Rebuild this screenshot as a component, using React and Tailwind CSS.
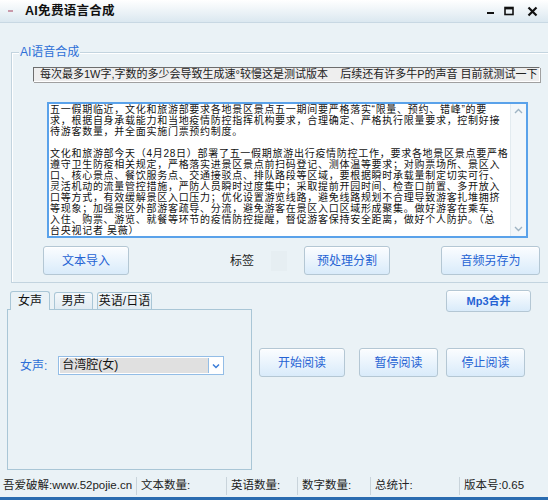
import React from "react";

const font = { fontFamily: '"Liberation Sans", "Noto Sans CJK SC", sans-serif' };

function Btn({ children, className = "" }) {
  return (
    <div
      className={
        "flex items-center justify-center rounded-[3px] border border-[#b4c7d4] bg-gradient-to-b from-[#fbfdff] to-[#d9ebfa] text-[12px] text-[#2563d4] shadow-[inset_0_1px_0_#ffffff] " +
        className
      }
    >
      {children}
    </div>
  );
}

const lines = [
  "五一假期临近，文化和旅游部要求各地景区景点五一期间要严格落实“限量、预约、错峰”的要",
  "求，根据自身承载能力和当地疫情防控指挥机构要求，合理确定、严格执行限量要求，控制好接",
  "待游客数量，并全面实施门票预约制度。",
  "\u00a0",
  "文化和旅游部今天（4月28日）部署了五一假期旅游出行疫情防控工作，要求各地景区景点要严格",
  "遵守卫生防疫相关规定，严格落实进景区景点前扫码登记、测体温等要求；对购票场所、景区入",
  "口、核心景点、餐饮服务点、交通接驳点、排队路段等区域，要根据瞬时承载量制定切实可行、",
  "灵活机动的流量管控措施，严防人员瞬时过度集中；采取提前开园时间、检查口前置、多开放入",
  "口等方式，有效缓解景区入口压力；优化设置游览线路，避免线路规划不合理导致游客扎堆拥挤",
  "等现象；加强景区外部游客疏导、分流，避免游客在景区入口区域形成聚集。做好游客在乘车、",
  "入住、购票、游览、就餐等环节的疫情防控提醒，督促游客保持安全距离，做好个人防护。（总",
  "台央视记者 吴薇）",
];

function Chevron({ up = false, className = "" }) {
  return (
    <svg width="9" height="6" viewBox="0 0 9 6" className={className}>
      <path
        d={up ? "M1 5 L4.5 1.5 L8 5" : "M1 1 L4.5 4.5 L8 1"}
        fill="none"
        stroke="#9fb4c4"
        strokeWidth="1.4"
      />
    </svg>
  );
}

export default function App() {
  return (
    <div
      className="w-[548px] h-[500px] bg-[#eaf2f6] flex flex-col overflow-hidden text-[#1a1a1a]"
      style={font}
    >
      {/* Title bar */}
      <div className="h-[23px] shrink-0 flex items-center bg-gradient-to-b from-[#ffffff] to-[#dbe8f0] border-b border-[#c8d8e3]">
        <div className="ml-[8px] w-[5px] h-[2px] bg-[#c99aab]" />
        <span className="ml-[12px] text-[12.5px] font-bold tracking-[0.3px] text-[#111]">
          AI免费语言合成
        </span>
        <div className="ml-auto mr-[10px] flex items-center gap-[9px]">
          <svg width="8" height="10" viewBox="0 0 8 10">
            <rect x="0" y="6" width="7" height="2" fill="#111" />
          </svg>
          <svg width="10" height="10" viewBox="0 0 10 10">
            <rect x="1" y="1.5" width="8" height="7" fill="none" stroke="#111" strokeWidth="1.6" />
            <rect x="1" y="1" width="8" height="2.4" fill="#111" />
          </svg>
          <svg width="11" height="11" viewBox="0 0 11 11" className="ml-[4px]">
            <path d="M1.5 1.5 L9.5 9.5 M9.5 1.5 L1.5 9.5" stroke="#111" strokeWidth="2.2" />
          </svg>
        </div>
      </div>

      {/* Group box */}
      <div className="relative mt-[29px] ml-[11px] h-[231px] shrink-0 border-t border-l border-b border-[#c3d4df] shadow-[inset_1px_1px_0_#ffffff]">
        <span className="absolute -top-[9px] left-[7px] px-[1px] bg-[#eaf2f6] text-[12px] leading-[16px] text-[#2d6fd7]">
          AI语音合成
        </span>

        {/* info label */}
        <div className="mt-[14px] ml-[21px] w-[507px] h-[15px] flex items-center overflow-hidden bg-[#eeeeee] border-t border-l border-[#6d6d6d] border-b border-r border-b-[#ffffff] border-r-[#ffffff] shadow-[1px_1px_0_#a0a0a0] text-[11px] leading-[13px] whitespace-pre pl-[6px] text-[#222]">
          每次最多1W字,字数的多少会导致生成速°较慢这是测试版本    后续还有许多牛P的声音 目前就测试一下
        </div>

        {/* text box */}
        <div className="mt-[20px] ml-[35px] w-[481px] h-[136px] border-[2px] border-[#5aa2ea] bg-white flex">
          <div className="flex-1 pl-[1px] overflow-hidden text-[10px] leading-[11px] tracking-[0.72px] text-[#111]">
            {lines.map((l, i) => (
              <div key={i} className="whitespace-nowrap h-[11px]">
                {l}
              </div>
            ))}
          </div>
          <div className="w-[16px] shrink-0 bg-[#f3f7fa] border-l border-[#e3ebf0] flex flex-col items-center justify-between py-[4px]">
            <Chevron up />
            <Chevron />
          </div>
        </div>

        {/* buttons */}
        <div className="mt-[8px] flex items-center h-[29px]">
          <Btn className="ml-[31px] w-[86px] h-[29px]">文本导入</Btn>
          <span className="ml-[101px] text-[12px] text-[#222]">标签</span>
          <div className="ml-[17px] w-[16px] h-[20px] bg-[#e6eef2]" />
          <Btn className="ml-[17px] w-[86px] h-[29px]">预处理分割</Btn>
          <Btn className="ml-[51px] w-[99px] h-[29px]">音频另存为</Btn>
        </div>
      </div>

      {/* lower section */}
      <div className="flex mt-[7px] shrink-0">
        <div className="ml-[7px] w-[245px] flex flex-col">
          <div className="flex items-end h-[19px] pl-[3px] gap-[4px] text-[12px] text-[#111]">
            <div className="w-[40px] h-[19px] flex items-center justify-center rounded-t-[3px] border border-b-0 border-[#a9c6d6] bg-[#eaf2f6] relative z-10 -mb-px">
              女声
            </div>
            <div className="w-[39px] h-[17px] flex items-center justify-center rounded-t-[3px] border border-b-0 border-[#a9c6d6] bg-gradient-to-b from-[#f4f8fb] to-[#e0ebf2]">
              男声
            </div>
            <div className="w-[55px] h-[17px] flex items-center justify-center rounded-t-[3px] border border-b-0 border-[#a9c6d6] bg-gradient-to-b from-[#f4f8fb] to-[#e0ebf2]">
              英语/日语
            </div>
          </div>
          <div className="h-[161px] border border-[#a9c6d6] bg-[#eaf2f6] flex items-start">
            <div className="mt-[46px] ml-[12px] flex items-center">
              <span className="text-[12px] text-[#2d6fd7]">女声:</span>
              <div className="ml-[11px] w-[166px] h-[19px] border border-[#93bde6] bg-white flex items-center p-[1px]">
                <div className="flex-1 h-full bg-[#e0e0e0] text-[12px] leading-[15px] pl-[2px] text-[#111]">
                  台湾腔(女)
                </div>
                <div className="w-[14px] h-full flex items-center justify-center border-l border-[#93bde6] bg-white">
                  <svg width="8" height="6" viewBox="0 0 8 6">
                    <path d="M1 1.5 L4 4.5 L7 1.5" fill="none" stroke="#3b7dd8" strokeWidth="1.5" />
                  </svg>
                </div>
              </div>
            </div>
          </div>
        </div>

        <div className="flex-1 flex flex-col">
          <Btn className="ml-[194px] w-[85px] h-[22px] !text-[11px] font-bold">Mp3合并</Btn>
          <div className="mt-[36px] flex">
            <Btn className="ml-[7px] w-[86px] h-[29px]">开始阅读</Btn>
            <Btn className="ml-[14px] w-[79px] h-[29px]">暂停阅读</Btn>
            <Btn className="ml-[8px] w-[79px] h-[29px]">停止阅读</Btn>
          </div>
        </div>
      </div>

      {/* status bar */}
      <div className="mt-[5px] flex-1 flex items-center text-[11.5px] text-[#222] border-b-[3px] border-[#2a6cb0]">
        <div className="w-[136px] pl-[3px] whitespace-nowrap">吾爱破解:www.52pojie.cn</div>
        <div className="w-px h-[18px] bg-[#c9d4db]" />
        <div className="w-[89px] pl-[4px] whitespace-nowrap">文本数量:</div>
        <div className="w-px h-[18px] bg-[#c9d4db]" />
        <div className="w-[70px] pl-[4px] whitespace-nowrap">英语数量:</div>
        <div className="w-px h-[18px] bg-[#c9d4db]" />
        <div className="w-[72px] pl-[4px] whitespace-nowrap">数字数量:</div>
        <div className="w-px h-[18px] bg-[#c9d4db]" />
        <div className="w-[88px] pl-[4px] whitespace-nowrap">总统计:</div>
        <div className="w-px h-[18px] bg-[#c9d4db]" />
        <div className="pl-[4px] whitespace-nowrap">版本号:0.65</div>
      </div>
    </div>
  );
}
